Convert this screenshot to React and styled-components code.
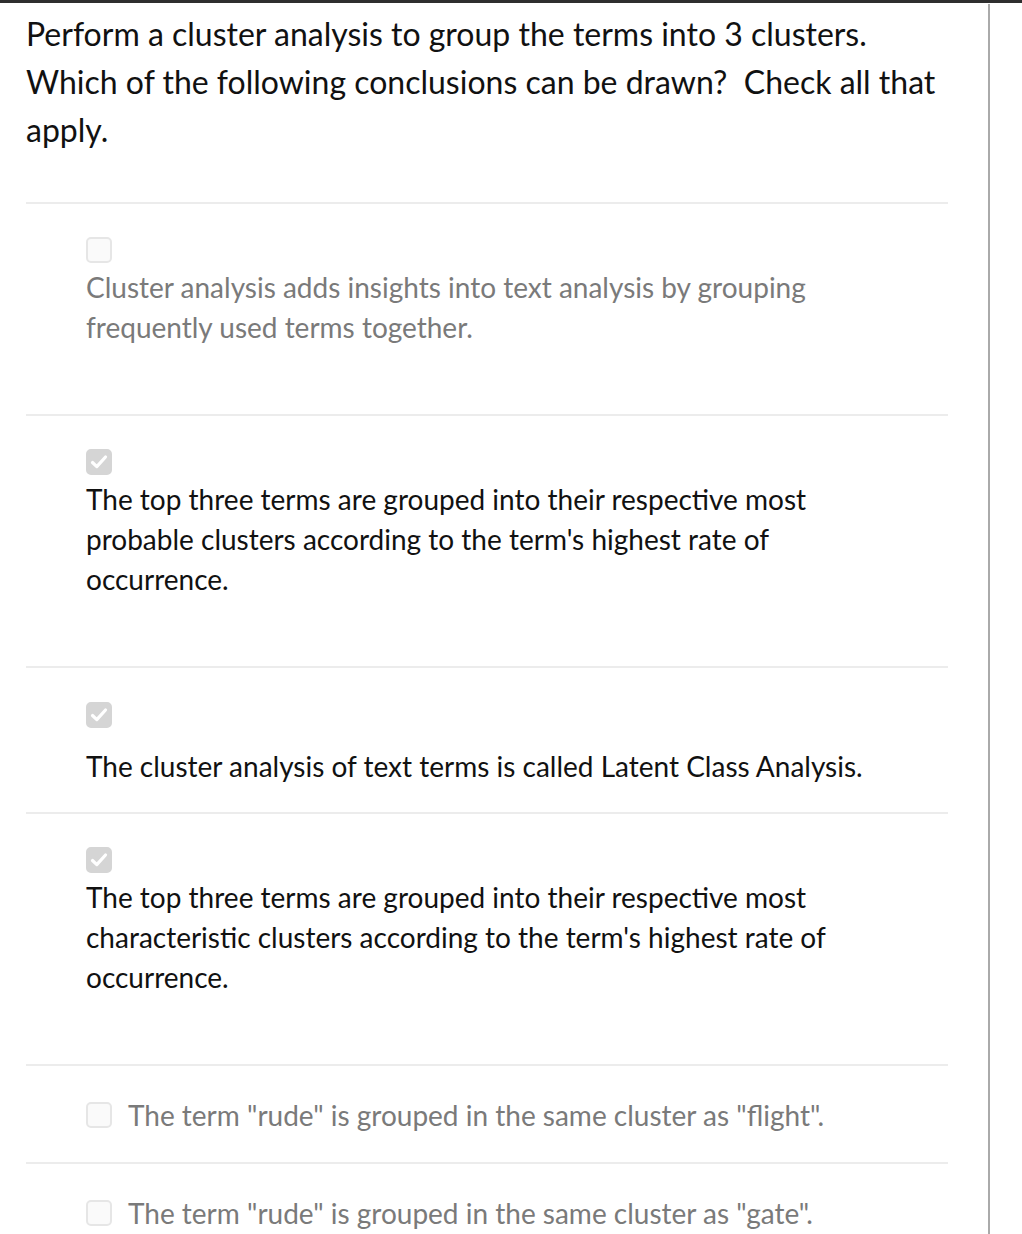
import React from "react";
import styled, { createGlobalStyle } from "styled-components";

const Global = createGlobalStyle`
  html, body { margin: 0; padding: 0; background: #fff; }
  body { font-family: Lato, "Open Sans", sans-serif; }
`;

const TopBar = styled.div`
  height: 3px;
  background: #2e2e2e;
`;

const Frame = styled.div`
  width: 990px;
  box-sizing: border-box;
  border-right: 2px solid #aaaaaa;
  min-height: 1229px;
  padding: 0 40px 0 26px;
  margin-top: 1px;
`;

const Question = styled.div`
  font-size: 32px;
  line-height: 48px;
  color: #111;
  padding-top: 6px;
  margin-bottom: 48px;
`;

const List = styled.div`
  display: flex;
  flex-direction: column;
`;

const Option = styled.label`
  display: flex;
  flex-direction: ${(p) => (p.$inline ? "row" : "column")};
  align-items: ${(p) => (p.$inline ? "center" : "flex-start")};
  gap: ${(p) => p.$gap}px;
  border-top: 2px solid #ececec;
  padding: ${(p) => p.$pt}px 0 ${(p) => p.$pb}px 60px;
`;

const Box = styled.span`
  width: 26px;
  height: 26px;
  box-sizing: border-box;
  border-radius: 5px;
  flex-shrink: 0;
  display: flex;
  align-items: center;
  justify-content: center;
  background: ${(p) => (p.$checked ? "#d5d5d5" : "#fafafa")};
  border: 2px solid ${(p) => (p.$checked ? "#d5d5d5" : "#e6e6e6")};
`;

const Text = styled.span`
  font-size: 28px;
  line-height: 40px;
  color: ${(p) => (p.$muted ? "#7a7a7a" : "#111")};
  max-width: 800px;
`;

const Check = () => (
  <svg width="18" height="16" viewBox="0 0 18 16">
    <path d="M2.5 8.5 L6.8 12.6 L15.5 3" fill="none" stroke="#fff" strokeWidth="3.2" strokeLinecap="round" strokeLinejoin="round" />
  </svg>
);

const options = [
  { text: "Cluster analysis adds insights into text analysis by grouping frequently used terms together.", muted: true, checked: false, pt: 33, pb: 67, gap: 4 },
  { text: "The top three terms are grouped into their respective most probable clusters according to the term's highest rate of occurrence.", muted: false, checked: true, pt: 33, pb: 67, gap: 4 },
  { text: "The cluster analysis of text terms is called Latent Class Analysis.", muted: false, checked: true, pt: 34, pb: 26, gap: 18 },
  { text: "The top three terms are grouped into their respective most characteristic clusters according to the term's highest rate of occurrence.", muted: false, checked: true, pt: 33, pb: 67, gap: 4 },
  { text: "The term \"rude\" is grouped in the same cluster as \"flight\".", muted: true, checked: false, pt: 29, pb: 27, gap: 16, inline: true },
  { text: "The term \"rude\" is grouped in the same cluster as \"gate\".", muted: true, checked: false, pt: 29, pb: 27, gap: 16, inline: true },
];

export default function App() {
  return (
    <>
      <Global />
      <TopBar />
      <Frame>
        <Question>
          Perform a cluster analysis to group the terms into 3 clusters. Which of the following conclusions can be drawn?&nbsp; Check all that apply.
        </Question>
        <List>
          {options.map((o, i) => (
            <Option key={i} $inline={o.inline} $pt={o.pt} $pb={o.pb} $gap={o.gap}>
              <Box $checked={o.checked}>{o.checked && <Check />}</Box>
              <Text $muted={o.muted}>{o.text}</Text>
            </Option>
          ))}
        </List>
      </Frame>
    </>
  );
}
